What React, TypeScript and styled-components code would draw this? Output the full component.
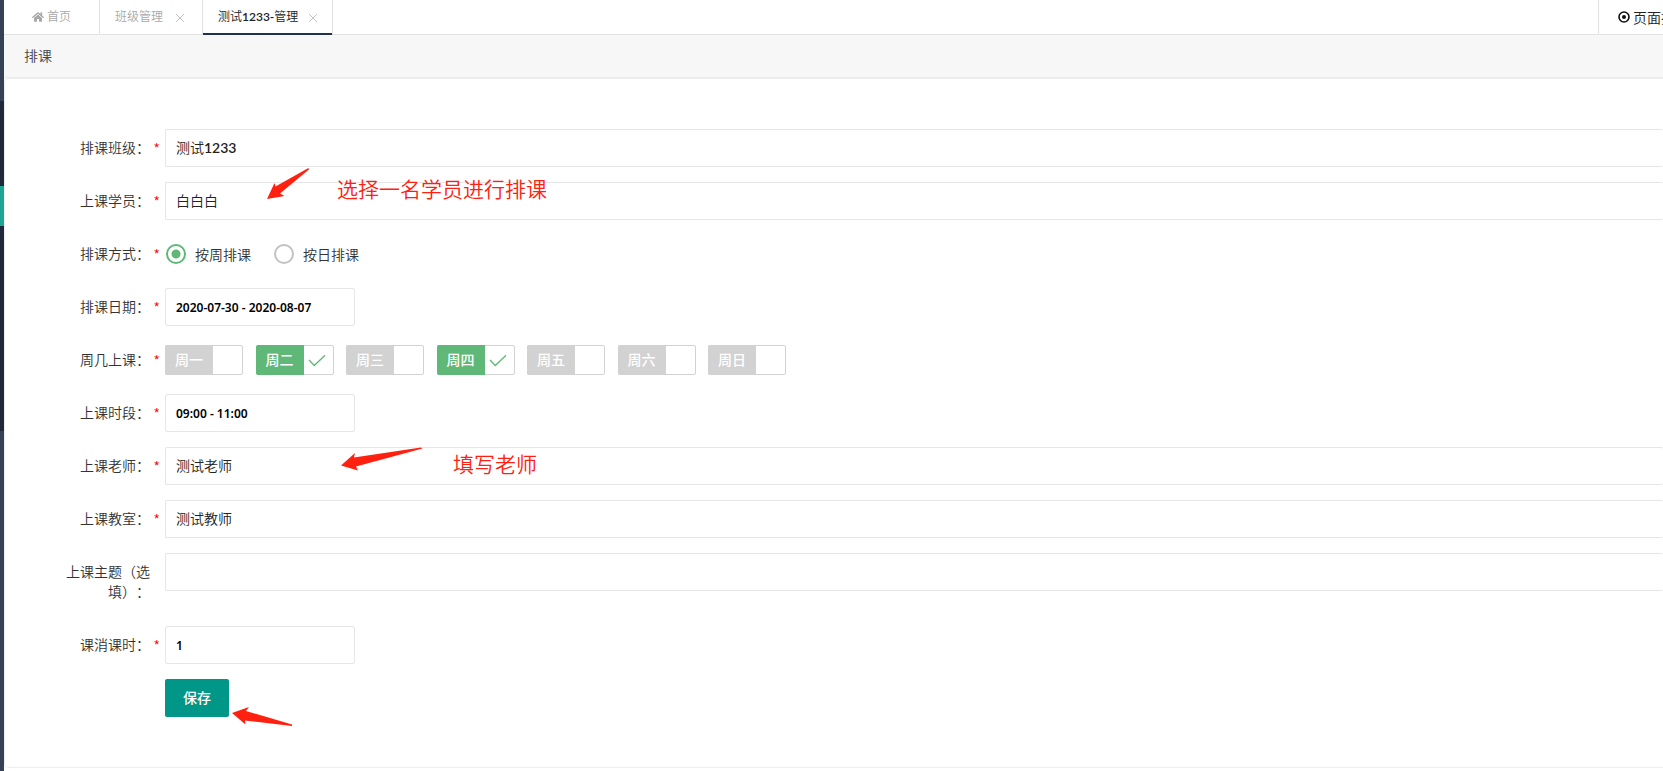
import React, { useState } from "react";
import styled, { createGlobalStyle, css } from "styled-components";
import { FaHome } from "react-icons/fa";

const GlobalStyle = createGlobalStyle`
  *, *::before, *::after { box-sizing: border-box; }
  body {
    margin: 0;
    background: #fff;
    color: #333;
    font: 350 14px/20px "Noto Sans CJK SC", sans-serif;
    text-spacing-trim: space-all;
    overflow-x: hidden;
  }
  input, button { font-family: inherit; font-weight: inherit; }
`;

const mixedFont = `"Lato Semibold", "Open Sans SemiBold", "Noto Sans CJK SC", sans-serif`;

const Shell = styled.div`
  display: flex;
  min-height: 100vh;
`;

const Rail = styled.aside`
  flex: 0 0 4px;
  display: flex;
  flex-direction: column;
  background: #344258;
`;

const RailItem = styled.span<{ $size: number; $tone: string }>`
  height: ${(p) => p.$size}px;
  background: ${(p) => p.$tone};
`;

const Main = styled.main`
  flex: 1;
  min-width: 0;
`;

const TabBar = styled.nav`
  display: flex;
  height: 35px;
  border-bottom: 1px solid #e2e2e2;
`;

const Tab = styled.div<{ $active?: boolean }>`
  display: flex;
  align-items: center;
  height: 35px;
  padding: 0 17px 1px 15px;
  gap: 12px;
  border-right: 1px solid #e2e2e2;
  color: #a8a8a8;
  ${(p) =>
    p.$active &&
    css`
      gap: 10px;
      padding-right: 14px;
      color: #222;
      box-shadow: inset 0 -2px #22324a;
    `}
`;

const HomeTab = styled(Tab)`
  padding: 0 28px 1px;
`;

const TabButton = styled.button`
  display: flex;
  align-items: center;
  gap: 3px;
  padding: 0;
  border: 0;
  background: none;
  color: inherit;
  font-family: ${mixedFont};
  font-size: 12px;
  line-height: 20px;
  white-space: nowrap;
  cursor: pointer;
`;

const CloseButton = styled.button`
  display: flex;
  padding: 2px 0 0;
  border: 0;
  background: none;
  color: #c2c2c2;
  cursor: pointer;
`;

const PageActions = styled.button`
  display: flex;
  align-items: center;
  gap: 3px;
  width: 65px;
  margin-left: auto;
  padding: 0 0 1px 19px;
  overflow: hidden;
  border: 0;
  border-left: 1px solid #e2e2e2;
  background: none;
  color: #222;
  font-size: 14px;
  white-space: nowrap;
  cursor: pointer;
  svg { flex: none; }
`;

const TitleBar = styled.header`
  padding: 10px 20px 12px;
  border-bottom: 1px solid #ececec;
  background: #f7f7f7;
  color: #444;
`;

const Title = styled.h1`
  margin: 0;
  font-size: 14px;
  line-height: 20px;
  font-weight: inherit;
`;

const Card = styled.section`
  border: 1px solid #eee;
  border-right: 0;
  border-radius: 5px 0 0 5px;
  padding: 50px 0;
`;

const Form = styled.form`
  display: flex;
  flex-direction: column;
  gap: 15px;
`;

const Row = styled.div`
  position: relative;
  display: flex;
  align-items: flex-start;
  min-height: 38px;
`;

const RowLabel = styled.label<{ $required?: boolean }>`
  position: relative;
  flex: none;
  width: 160px;
  padding: 8px 15px 10px 56px;
  text-align: right;
  ${(p) =>
    p.$required &&
    css`
      &::after {
        content: "*";
        position: absolute;
        right: 5px;
        top: 9px;
        color: #f00;
      }
    `}
`;

const TextInput = styled.input<{ $short?: boolean }>`
  height: 38px;
  padding: 0 10px 2px;
  border: 1px solid #e6e6e6;
  border-radius: 2px;
  background: #fff;
  color: #222;
  font-family: ${mixedFont};
  font-size: 14px;
  outline: 0;
  ${(p) =>
    p.$short
      ? css`
          width: 190px;
          padding-bottom: 0;
          color: #000;
          font: 600 12px "Noto Sans", sans-serif;
        `
      : css`
          flex: 1;
          min-width: 0;
          border-right: 0;
        `}
`;

const RadioGroup = styled.div`
  display: flex;
  gap: 23px;
  padding: 9px 0 9px 1px;
`;

const RadioLabel = styled.label`
  display: flex;
  align-items: center;
  gap: 9px;
  cursor: pointer;
`;

const Radio = styled.input`
  appearance: none;
  width: 20px;
  height: 20px;
  margin: 0;
  border: 1px solid #c2c2c2;
  border-width: 2px;
  border-radius: 50%;
  &:checked {
    border-color: #5fb878;
    background: radial-gradient(circle, #5fb878 4px, #fff 5px);
  }
`;

const WeekGroup = styled.div`
  display: flex;
  justify-content: space-between;
  width: 621px;
  padding: 4px 0;
`;

const DayChip = styled.label`
  position: relative;
  display: flex;
  height: 30px;
  border: 1px solid #d2d2d2;
  border-radius: 2px;
  cursor: pointer;
`;

const DayInput = styled.input`
  position: absolute;
  inset: 0;
  margin: 0;
  opacity: 0;
`;

const DayName = styled.span<{ $on: boolean }>`
  margin: -1px 0 -1px -1px;
  padding: 0 10px 2px;
  border-radius: 2px 0 0 2px;
  background: ${(p) => (p.$on ? "#5fb878" : "#d2d2d2")};
  color: #fff;
  font-weight: 500;
  line-height: 28px;
`;

const DayMark = styled.span`
  display: flex;
  align-items: center;
  justify-content: center;
  width: 29px;
  padding-right: 2px;
`;

const SaveButton = styled.button`
  height: 38px;
  margin-left: 160px;
  padding: 0 18px 2px;
  border: 0;
  border-radius: 2px;
  background: #009688;
  color: #fff;
  font-size: 14px;
  font-weight: 500;
  cursor: pointer;
`;

const Note = styled.span<{ $x: number; $y: number }>`
  position: absolute;
  left: ${(p) => p.$x}px;
  top: ${(p) => p.$y}px;
  color: #ff2010;
  font-size: 21px;
  line-height: 30px;
  white-space: nowrap;
  pointer-events: none;
`;

const ArrowSvg = styled.svg<{ $x: number; $y: number }>`
  position: absolute;
  left: ${(p) => p.$x}px;
  top: ${(p) => p.$y}px;
  fill: #ff2010;
  pointer-events: none;
`;

const DAYS = ["周一", "周二", "周三", "周四", "周五", "周六", "周日"];

function CloseIcon() {
  return (
    <svg width="10" height="10" viewBox="0 0 10 10" fill="none" stroke="currentColor">
      <path d="M1 1l8 8M9 1l-8 8" />
    </svg>
  );
}

function TargetIcon() {
  return (
    <svg width="12" height="12" viewBox="0 0 12 12">
      <circle cx="6" cy="6" r="5" fill="none" stroke="#111" strokeWidth="1.6" />
      <circle cx="6" cy="6" r="2" fill="#111" />
    </svg>
  );
}

function CheckIcon() {
  return (
    <svg width="18" height="13" viewBox="0 0 18 13" fill="none" stroke="#5fb878" strokeWidth="1.3">
      <path d="M1 6l5.3 5.5L17 1.2" />
    </svg>
  );
}

interface FieldProps {
  id: string;
  label: string;
  value?: string;
  short?: boolean;
  optional?: boolean;
  children?: React.ReactNode;
}

function Field({ id, label, value = "", short, optional, children }: FieldProps) {
  return (
    <Row>
      <RowLabel htmlFor={id} $required={!optional}>{label}</RowLabel>
      <TextInput id={id} type="text" defaultValue={value} $short={short} />
      {children}
    </Row>
  );
}

export default function App() {
  const [mode, setMode] = useState("week");
  const [days, setDays] = useState<string[]>(["周二", "周四"]);
  const toggle = (day: string) =>
    setDays((list) => (list.includes(day) ? list.filter((d) => d !== day) : [...list, day]));

  return (
    <>
      <GlobalStyle />
      <Shell>
        <Rail>
          <RailItem $size={101} $tone="#344258" />
          <RailItem $size={85} $tone="#20293a" />
          <RailItem $size={40} $tone="#1fa595" />
          <RailItem $size={205} $tone="#20293a" />
        </Rail>
        <Main>
          <TabBar>
            <HomeTab>
              <TabButton type="button"><FaHome size={12} />首页</TabButton>
            </HomeTab>
            <Tab>
              <TabButton type="button">班级管理</TabButton>
              <CloseButton type="button" aria-label="关闭"><CloseIcon /></CloseButton>
            </Tab>
            <Tab $active>
              <TabButton type="button">测试1233-管理</TabButton>
              <CloseButton type="button" aria-label="关闭"><CloseIcon /></CloseButton>
            </Tab>
            <PageActions type="button"><TargetIcon />页面操作</PageActions>
          </TabBar>
          <TitleBar><Title>排课</Title></TitleBar>
          <Card>
            <Form onSubmit={(e) => e.preventDefault()}>
              <Field id="class" label="排课班级：" value="测试1233" />
              <Field id="student" label="上课学员：" value="白白白">
                <ArrowSvg $x={262} $y={-15} width="44" height="33" viewBox="0 0 44 33">
                  <path d="M0 32L7.500 16L8.500 19.500L41 1.200L42.500 2L13 26.500L17.500 29Z" />
                </ArrowSvg>
                <Note $x={332} $y={-9}>选择一名学员进行排课</Note>
              </Field>
              <Row role="radiogroup" aria-labelledby="mode-label">
                <RowLabel as="span" id="mode-label" $required>排课方式：</RowLabel>
                <RadioGroup>
                  <RadioLabel>
                    <Radio type="radio" name="mode" checked={mode === "week"} onChange={() => setMode("week")} />
                    按周排课
                  </RadioLabel>
                  <RadioLabel>
                    <Radio type="radio" name="mode" checked={mode === "day"} onChange={() => setMode("day")} />
                    按日排课
                  </RadioLabel>
                </RadioGroup>
              </Row>
              <Field id="dates" label="排课日期：" value="2020-07-30 - 2020-08-07" short />
              <Row role="group" aria-labelledby="days-label">
                <RowLabel as="span" id="days-label" $required>周几上课：</RowLabel>
                <WeekGroup>
                  {DAYS.map((day) => {
                    const on = days.includes(day);
                    return (
                      <DayChip key={day}>
                        <DayInput type="checkbox" checked={on} onChange={() => toggle(day)} />
                        <DayName $on={on}>{day}</DayName>
                        <DayMark>{on && <CheckIcon />}</DayMark>
                      </DayChip>
                    );
                  })}
                </WeekGroup>
              </Row>
              <Field id="time" label="上课时段：" value="09:00 - 11:00" short />
              <Field id="teacher" label="上课老师：" value="测试老师">
                <ArrowSvg $x={336} $y={0} width="82" height="24" viewBox="0 0 82 24">
                  <path d="M0 18.500L14 6L13 10.500L80 0.500L81.500 1.500L15 19.500L17 23.500Z" />
                </ArrowSvg>
                <Note $x={448} $y={1}>填写老师</Note>
              </Field>
              <Field id="room" label="上课教室：" value="测试教师" />
              <Field id="topic" label="上课主题（选填）：" optional />
              <Field id="hours" label="课消课时：" value="1" short />
              <Row>
                <SaveButton type="submit">保存</SaveButton>
                <ArrowSvg $x={227} $y={27} width="61" height="21" viewBox="0 0 61 21">
                  <path d="M0 7L17 1L14 5L60 18.500L60 20L13 14.500L13.500 18.500Z" />
                </ArrowSvg>
              </Row>
            </Form>
          </Card>
        </Main>
      </Shell>
    </>
  );
}
